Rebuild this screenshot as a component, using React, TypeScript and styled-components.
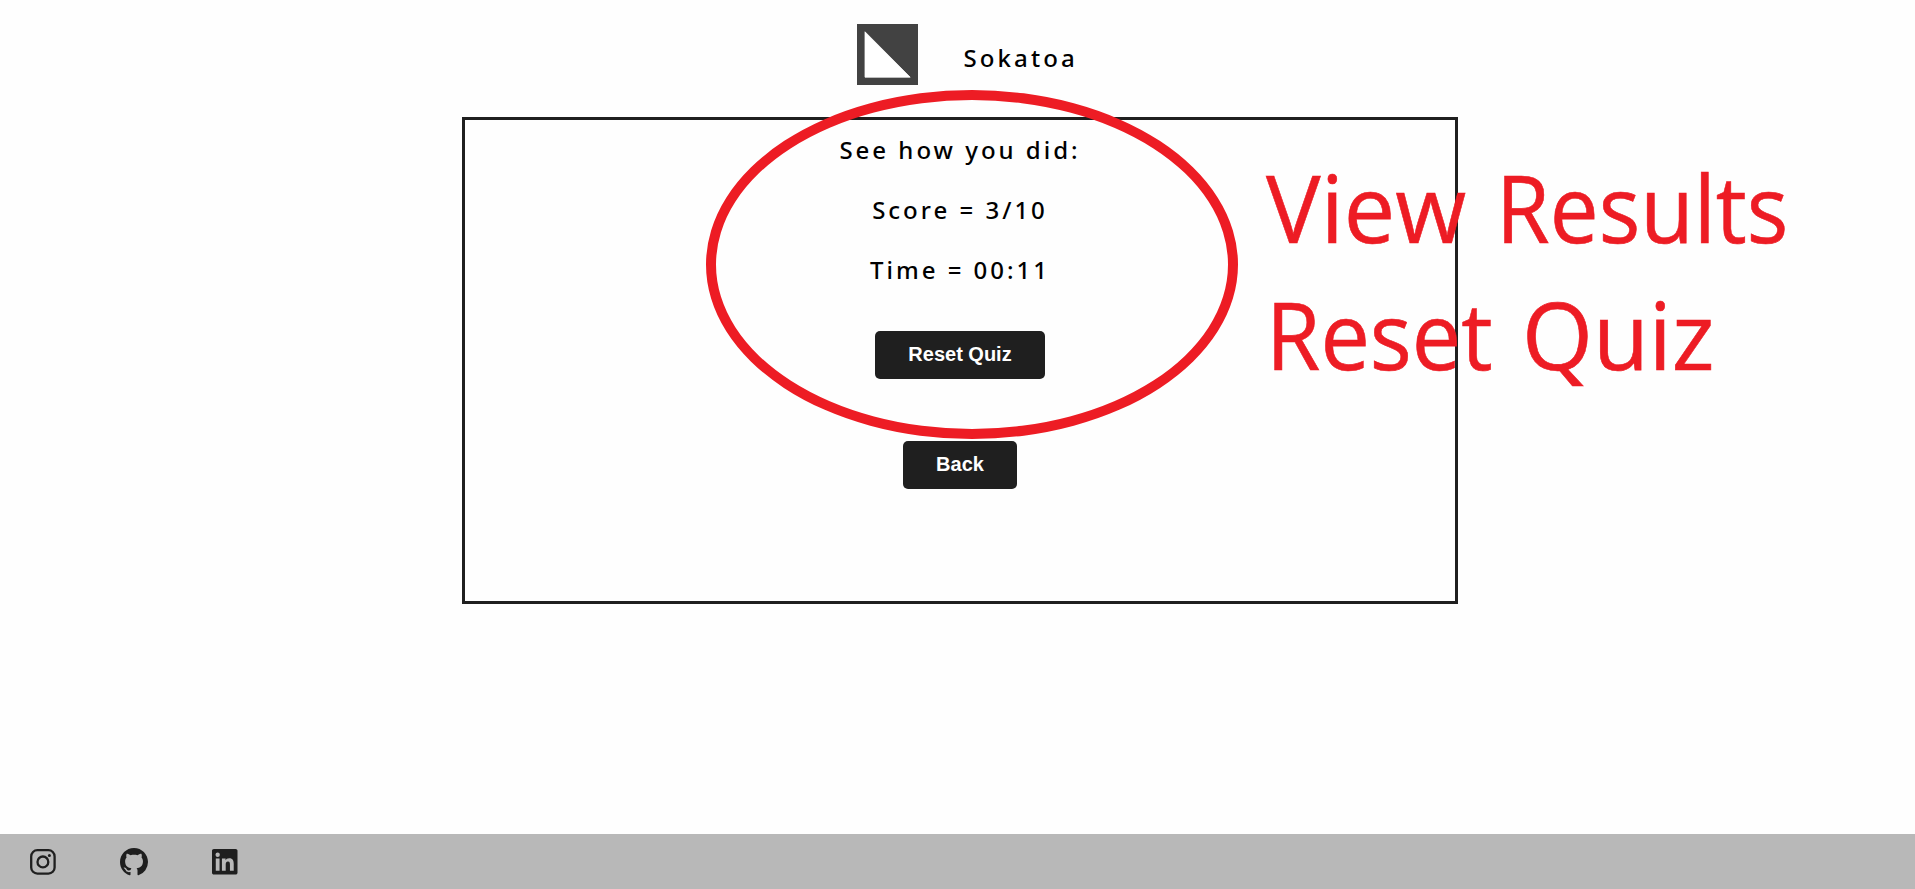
import React from "react";
import styled, { createGlobalStyle } from "styled-components";
import { BsGithub } from "react-icons/bs";

const GlobalStyle = createGlobalStyle`
  body {
    margin: 0;
    background: #fefefe;
    color: #000;
    font-family: "Noto Sans", "Open Sans", sans-serif;
  }
`;

const Page = styled.div`
  position: relative;
  display: flex;
  flex-direction: column;
  height: 889px;
  overflow: hidden;
`;

const Header = styled.header`
  display: flex;
  align-items: flex-start;
  padding: 24px 0 0 857px;
  height: 93px;
  box-sizing: border-box;
`;

const Logo = styled.svg`
  display: block;
  width: 61px;
  height: 61px;
`;

const Title = styled.h1`
  margin: 17px 0 0 45.5px;
  font-size: 24px;
  line-height: 33px;
  font-weight: 500;
  letter-spacing: 3.1px;
`;

const Panel = styled.main`
  box-sizing: border-box;
  width: 996px;
  height: 487px;
  margin: 24px 0 0 462px;
  border: 3px solid #1f1f1f;
  display: flex;
  flex-direction: column;
  align-items: center;
  padding-top: 13px;
`;

const Line = styled.p`
  margin: 0 0 27px;
  font-size: 24px;
  line-height: 33px;
  font-weight: 500;
  letter-spacing: 3px;
`;

const Button = styled.button<{ $gap: number }>`
  margin: ${(p) => p.$gap}px 0 0;
  height: 48px;
  padding: 0 33px 2px;
  border: 0;
  border-radius: 5px;
  background: #1f1f1f;
  color: #fff;
  font: bold 20px "Liberation Sans", Arial, sans-serif;
`;

const Footer = styled.footer`
  margin-top: auto;
  height: 55px;
  box-sizing: border-box;
  padding: 1px 0 0 30px;
  display: flex;
  align-items: center;
  gap: 64px;
  background: #b8b8b8;
  color: #1f1f1f;
`;

const SocialLink = styled.a<{ $size: number }>`
  display: flex;
  color: inherit;

  svg {
    display: block;
    width: ${(p) => p.$size}px;
    height: ${(p) => p.$size}px;
  }
`;

const Ring = styled.div`
  position: absolute;
  left: 706px;
  top: 90px;
  width: 532px;
  height: 349px;
  box-sizing: border-box;
  border: 10px solid #ed1c24;
  border-radius: 50%;
  pointer-events: none;
`;

const Note = styled.div<{ $x: number; $y: number }>`
  position: absolute;
  left: ${(p) => p.$x}px;
  top: ${(p) => p.$y}px;
  color: #ed1c24;
  font-family: "Open Sans", "Noto Sans", sans-serif;
  font-size: 94px;
  line-height: 128px;
  white-space: nowrap;
  pointer-events: none;
  -webkit-text-stroke: 0.6px #ed1c24;
`;

const Word = styled.span<{ $stretch: number; $indent?: number }>`
  display: inline-block;
  margin-left: ${(p) => p.$indent ?? 0}px;
  transform: scaleX(${(p) => p.$stretch});
  transform-origin: left;
`;

export default function App() {
  return (
    <Page>
      <GlobalStyle />
      <Header>
        <Logo viewBox="0 0 61 61">
          <rect width="61" height="61" fill="#424242" />
          <path d="M8 7.8V53.2H53.2Z" fill="#fff" stroke="#fff" strokeWidth=".8" strokeLinejoin="round" />
        </Logo>
        <Title>Sokatoa</Title>
      </Header>
      <Panel>
        <Line>See how you did:</Line>
        <Line>Score = 3/10</Line>
        <Line>Time = 00:11</Line>
        <Button $gap={18}>Reset Quiz</Button>
        <Button $gap={62}>Back</Button>
      </Panel>
      <Footer>
        <SocialLink $size={26} aria-label="Instagram">
          <svg viewBox="0 0 26 26" fill="none" stroke="currentColor" strokeWidth="2.3">
            <rect x="1.2" y="1.2" width="23.4" height="23.4" rx="6.2" />
            <circle cx="12.9" cy="12.9" r="5.4" />
            <circle cx="19.4" cy="6.4" r="1.5" fill="currentColor" stroke="none" />
          </svg>
        </SocialLink>
        <SocialLink $size={28} aria-label="GitHub">
          <BsGithub />
        </SocialLink>
        <SocialLink $size={25.5} aria-label="LinkedIn">
          <svg viewBox="0 0 24 24" fill="currentColor">
            <path d="M20.447 20.452h-3.554v-5.569c0-1.328-.027-3.037-1.852-3.037-1.853 0-2.136 1.445-2.136 2.939v5.667H9.351V9h3.414v1.561h.046c.477-.9 1.637-1.85 3.37-1.85 3.601 0 4.267 2.37 4.267 5.455v6.286zM5.337 7.433a2.062 2.062 0 0 1-2.063-2.065 2.064 2.064 0 1 1 2.063 2.065zm1.782 13.019H3.555V9h3.564v11.452zM22.225 0H1.771C.792 0 0 .774 0 1.729v20.542C0 23.227.792 24 1.771 24h20.451C23.2 24 24 23.227 24 22.271V1.729C24 .774 23.2 0 22.222 0h.003z" />
          </svg>
        </SocialLink>
      </Footer>
      <Ring />
      <Note $x={1266} $y={143}>
        <Word $stretch={0.975}>View</Word> <Word $stretch={0.927}>Results</Word>
      </Note>
      <Note $x={1265.5} $y={270}>
        <Word $stretch={0.9375}>Reset</Word> <Word $stretch={0.97} $indent={-10}>Quiz</Word>
      </Note>
    </Page>
  );
}
